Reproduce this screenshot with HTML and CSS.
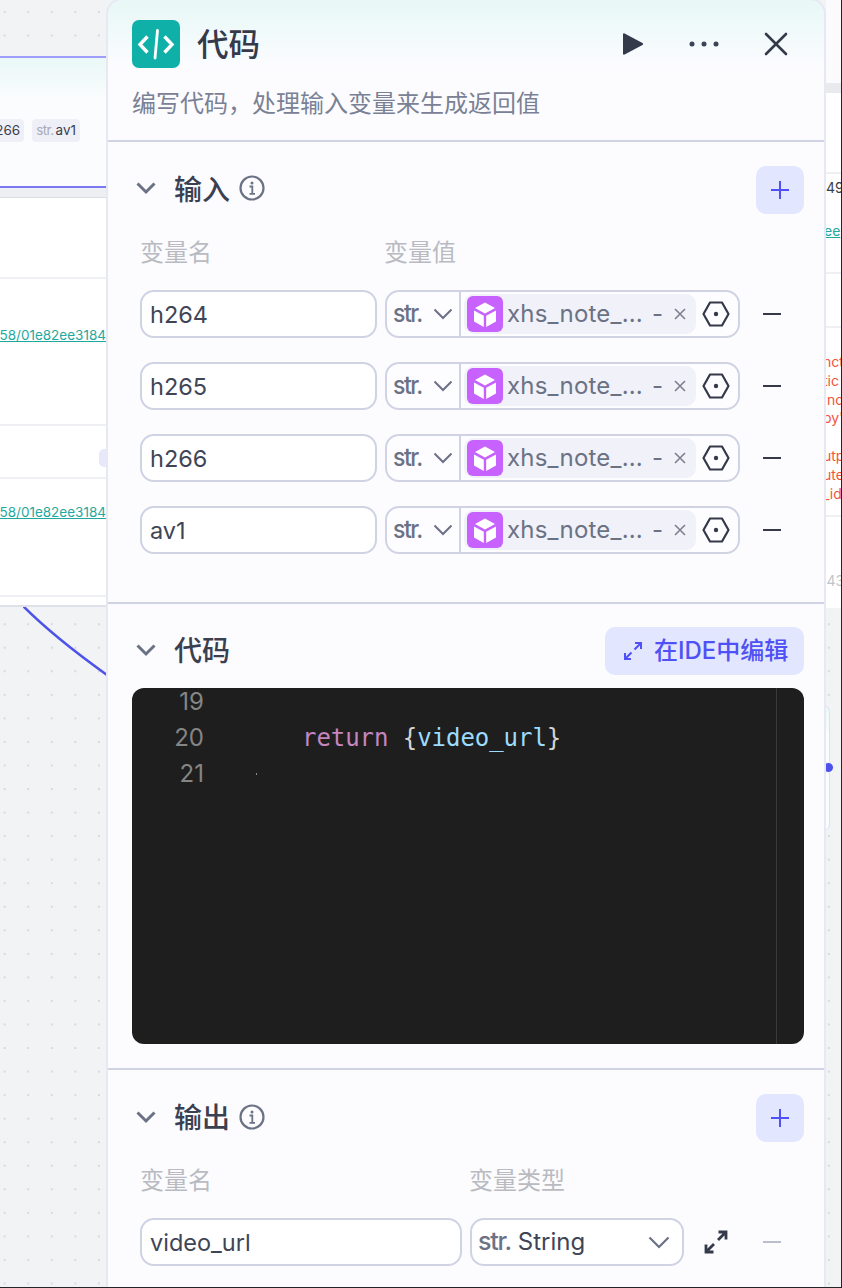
FILE: index.html
```html
<!DOCTYPE html>
<html lang="zh">
<head>
<meta charset="utf-8">
<title>代码</title>
<link rel="stylesheet" href="styles.css">
</head>
<body>
<div class="stage">
  <svg class="edge" width="84" height="72" viewBox="0 0 84 72"><path d="M0 0C26 26 56 49 84 69" fill="none" stroke="#4d53e8" stroke-width="2.600"/></svg>

  <div class="bg-left">
    <div class="mini-node">
      <div class="mini-chips">
        <span class="mini-chip chip-cut">266</span>
        <span class="mini-chip"><i>str.</i>av1</span>
      </div>
    </div>
    <div class="mini-gap"></div>
    <div class="table">
      <div class="trow r1"></div>
      <div class="trow r2"><a class="tlink">58/01e82ee3184</a></div>
      <div class="trow r3"><span class="tbadge"></span></div>
      <div class="trow r4"><a class="tlink">58/01e82ee3184</a></div>
      <div class="trow r5"></div>
    </div>
  </div>

  <div class="bg-right">
    <div class="rtop"></div>
    <div class="rgap"></div>
    <div class="rtable">
      <div class="rrow h81"></div>
      <div class="rrow h100 num"><span class="rnum">49</span><a class="rlink">ee</a></div>
      <div class="rrow h54"></div>
      <div class="rrow h189 red">
        <div>nct</div><div>tic</div><div>&nbsp;nc</div><div>py'</div><div>&nbsp;</div><div>utp</div><div>ute</div><div>_id</div>
      </div>
      <div class="rrow h90 gray">543</div>
    </div>
  </div>

  <div class="side-node"><span class="side-dot"></span></div>

  <section class="panel">
    <header class="phead">
      <div class="ptitle-row">
        <span class="logo">
          <svg width="48" height="48" viewBox="0 0 48 48" fill="none" stroke="#fff" stroke-width="3.400"><path d="M15.500 16.500 8 24.500l7.500 8M32.500 16.500 40 24.500l-7.500 8" stroke-linejoin="miter"/><path d="M25.500 10.500 23 38" stroke-width="2.800" stroke-linecap="round"/></svg>
        </span>
        <h1 class="ptitle">代码</h1>
        <div class="pactions">
          <svg class="act-play" width="24" height="24" viewBox="0 0 24 24"><path d="M2 2.500C2 1.500 2.800 1 3.600 1.400L21.500 11c.8.4.8 1.600 0 2L3.600 22.600C2.800 23 2 22.500 2 21.500Z" fill="#343a4a"/></svg>
          <svg class="act-more" width="32" height="8" viewBox="0 0 32 8" fill="#3d4354"><circle cx="4" cy="4" r="2.500"/><circle cx="16" cy="4" r="2.500"/><circle cx="28" cy="4" r="2.500"/></svg>
          <svg class="act-close" width="24" height="24" viewBox="0 0 24 24" fill="none" stroke="#343a4a" stroke-width="2.600" stroke-linecap="round"><path d="M2 2 22 22M22 2 2 22"/></svg>
        </div>
      </div>
      <p class="psub">编写代码，处理输入变量来生成返回值</p>
    </header>

    <div class="sec sec-in">
      <div class="sec-head">
        <svg class="caret" width="24" height="24" viewBox="0 0 24 24" fill="none" stroke="#6b7285" stroke-width="3"><path d="M3.500 7.500 12 16l8.500-8.500"/></svg>
        <h2 class="sec-title">输入</h2>
        <svg class="info" width="26" height="26" viewBox="0 0 26 26" fill="none" stroke="#6b7285" stroke-width="2.200"><circle cx="13" cy="13" r="11.500"/><path d="M10.500 11.500H13.300V18.500M10.500 18.800H16" stroke-width="1.800"/><circle cx="13" cy="8" r="1.500" fill="#6b7285" stroke="none"/></svg>
        <button class="add"><svg width="20" height="20" viewBox="0 0 20 20" stroke="#4f50f5" stroke-width="2" fill="none"><path d="M1 10h18M10 1v18"/></svg></button>
      </div>
      <div class="labels l-in"><span>变量名</span><span>变量值</span></div>

      <div class="vrow"><div class="box name">h264</div><div class="box val"><span class="stype"><b>str.</b><svg class="vchev" width="20" height="12" viewBox="0 0 20 12" fill="none" stroke="#6b7285" stroke-width="2"><path d="M1.500 1.500 10 10l8.500-8.500"/></svg></span><span class="vchip"><span class="cube"><svg width="28" height="28" viewBox="0 0 28 28" fill="#fff"><path d="M14 2.500 24 8l-10 5.500L4 8Z"/><path d="M3 10.500l9.800 5.300V27L3 21.500ZM25 10.500l-9.800 5.300V27L25 21.500Z"/></svg></span><span class="cname">xhs_note_...</span><span class="cdash">-</span><svg class="cx" width="12" height="12" viewBox="0 0 12 12" stroke="#80838f" stroke-width="1.700" fill="none"><path d="M1 1 11 11M11 1 1 11"/></svg></span><svg class="hex" width="28" height="26" viewBox="0 0 28 26" fill="none" stroke="#343a4a" stroke-width="2.200"><path d="M8 1.500H20L26.500 13 20 24.500H8L1.500 13Z" stroke-linejoin="round"/><circle cx="14" cy="13" r="2.200" fill="#343a4a" stroke="none"/></svg></div><span class="minus"></span></div>

      <div class="vrow"><div class="box name">h265</div><div class="box val"><span class="stype"><b>str.</b><svg class="vchev" width="20" height="12" viewBox="0 0 20 12" fill="none" stroke="#6b7285" stroke-width="2"><path d="M1.500 1.500 10 10l8.500-8.500"/></svg></span><span class="vchip"><span class="cube"><svg width="28" height="28" viewBox="0 0 28 28" fill="#fff"><path d="M14 2.500 24 8l-10 5.500L4 8Z"/><path d="M3 10.500l9.800 5.300V27L3 21.500ZM25 10.500l-9.800 5.300V27L25 21.500Z"/></svg></span><span class="cname">xhs_note_...</span><span class="cdash">-</span><svg class="cx" width="12" height="12" viewBox="0 0 12 12" stroke="#80838f" stroke-width="1.700" fill="none"><path d="M1 1 11 11M11 1 1 11"/></svg></span><svg class="hex" width="28" height="26" viewBox="0 0 28 26" fill="none" stroke="#343a4a" stroke-width="2.200"><path d="M8 1.500H20L26.500 13 20 24.500H8L1.500 13Z" stroke-linejoin="round"/><circle cx="14" cy="13" r="2.200" fill="#343a4a" stroke="none"/></svg></div><span class="minus"></span></div>

      <div class="vrow"><div class="box name">h266</div><div class="box val"><span class="stype"><b>str.</b><svg class="vchev" width="20" height="12" viewBox="0 0 20 12" fill="none" stroke="#6b7285" stroke-width="2"><path d="M1.500 1.500 10 10l8.500-8.500"/></svg></span><span class="vchip"><span class="cube"><svg width="28" height="28" viewBox="0 0 28 28" fill="#fff"><path d="M14 2.500 24 8l-10 5.500L4 8Z"/><path d="M3 10.500l9.800 5.300V27L3 21.500ZM25 10.500l-9.800 5.300V27L25 21.500Z"/></svg></span><span class="cname">xhs_note_...</span><span class="cdash">-</span><svg class="cx" width="12" height="12" viewBox="0 0 12 12" stroke="#80838f" stroke-width="1.700" fill="none"><path d="M1 1 11 11M11 1 1 11"/></svg></span><svg class="hex" width="28" height="26" viewBox="0 0 28 26" fill="none" stroke="#343a4a" stroke-width="2.200"><path d="M8 1.500H20L26.500 13 20 24.500H8L1.500 13Z" stroke-linejoin="round"/><circle cx="14" cy="13" r="2.200" fill="#343a4a" stroke="none"/></svg></div><span class="minus"></span></div>

      <div class="vrow"><div class="box name">av1</div><div class="box val"><span class="stype"><b>str.</b><svg class="vchev" width="20" height="12" viewBox="0 0 20 12" fill="none" stroke="#6b7285" stroke-width="2"><path d="M1.500 1.500 10 10l8.500-8.500"/></svg></span><span class="vchip"><span class="cube"><svg width="28" height="28" viewBox="0 0 28 28" fill="#fff"><path d="M14 2.500 24 8l-10 5.500L4 8Z"/><path d="M3 10.500l9.800 5.300V27L3 21.500ZM25 10.500l-9.800 5.300V27L25 21.500Z"/></svg></span><span class="cname">xhs_note_...</span><span class="cdash">-</span><svg class="cx" width="12" height="12" viewBox="0 0 12 12" stroke="#80838f" stroke-width="1.700" fill="none"><path d="M1 1 11 11M11 1 1 11"/></svg></span><svg class="hex" width="28" height="26" viewBox="0 0 28 26" fill="none" stroke="#343a4a" stroke-width="2.200"><path d="M8 1.500H20L26.500 13 20 24.500H8L1.500 13Z" stroke-linejoin="round"/><circle cx="14" cy="13" r="2.200" fill="#343a4a" stroke="none"/></svg></div><span class="minus"></span></div>
    </div>

    <div class="sec sec-code">
      <div class="sec-head">
        <svg class="caret" width="24" height="24" viewBox="0 0 24 24" fill="none" stroke="#6b7285" stroke-width="3"><path d="M3.500 7.500 12 16l8.500-8.500"/></svg>
        <h2 class="sec-title">代码</h2>
        <button class="ide"><svg width="20" height="20" viewBox="0 0 20 20" fill="none" stroke="#4f50f5" stroke-width="2"><path d="M12 2h6v6M18 2l-6.500 6.500M8 18H2v-6M2 18l6.500-6.500"/></svg>在IDE中编辑</button>
      </div>
      <div class="code">
        <div class="gutter"><span>19</span><span>20</span><span>21</span></div>
        <div class="src"><span>&nbsp;</span><span><em class="kw">return</em> <em class="br">{</em><em class="id">video_url</em><em class="br">}</em></span></div>
        <div class="mini-map"></div>
        <span class="speck"></span>
      </div>
    </div>

    <div class="sec sec-out">
      <div class="sec-head">
        <svg class="caret" width="24" height="24" viewBox="0 0 24 24" fill="none" stroke="#6b7285" stroke-width="3"><path d="M3.500 7.500 12 16l8.500-8.500"/></svg>
        <h2 class="sec-title">输出</h2>
        <svg class="info" width="26" height="26" viewBox="0 0 26 26" fill="none" stroke="#6b7285" stroke-width="2.200"><circle cx="13" cy="13" r="11.500"/><path d="M10.500 11.500H13.300V18.500M10.500 18.800H16" stroke-width="1.800"/><circle cx="13" cy="8" r="1.500" fill="#6b7285" stroke="none"/></svg>
        <button class="add"><svg width="20" height="20" viewBox="0 0 20 20" stroke="#4f50f5" stroke-width="2" fill="none"><path d="M1 10h18M10 1v18"/></svg></button>
      </div>
      <div class="labels l-out"><span>变量名</span><span>变量类型</span></div>
      <div class="vrow orow">
        <div class="box name">video_url</div>
        <div class="box osel"><b>str.</b><span class="oname">String</span><svg class="ochev" width="22" height="13" viewBox="0 0 22 13" fill="none" stroke="#6b7285" stroke-width="2.200"><path d="M1.500 1.500 11 11l9.500-9.500"/></svg></div>
        <svg class="oexp" width="24" height="24" viewBox="0 0 24 24" fill="none" stroke="#343a4a" stroke-width="2.800"><path d="M14.500 2H22v7.500M22 2l-8 8M9.500 22H2v-7.500M2 22l8-8"/></svg>
        <span class="minus off"></span>
      </div>
    </div>
  </section>
</div>
</body>
</html>
```
FILE: styles.css
```css
* { box-sizing: border-box; }
html, body { margin: 0; padding: 0; }
body { font-family: "Inter", "Noto Sans CJK SC", sans-serif; }
.stage {
  position: relative;
  width: 842px;
  height: 1288px;
  overflow: hidden;
  border-right: 1px solid #24252a;
  border-bottom: 1px solid #24252a;
  background-color: #f2f3f5;
  background-image: radial-gradient(circle at center, #c6c8d0 0, #c6c8d0 .5px, transparent 1px);
  background-size: 23.55px 23.55px;
  background-position: -7.1px .2px;
}
.edge { position: absolute; left: 23px; top: 606px; }

/* Canvas nodes behind the panel */
.bg-left { position: absolute; left: 0; top: 56px; width: 107px; height: 551px; display: flex; flex-direction: column; }
.mini-node {
  height: 132px;
  border-top: 2px solid #a19dfb;
  border-bottom: 2px solid #7c78f2;
  background: linear-gradient(#e9f8f6 0, #fbfcfe 42px);
  padding-top: 61px;
}
.mini-chips { display: flex; justify-content: flex-end; gap: 8px; padding-right: 27px; }
.mini-chip { height: 23px; padding: 0 4px; border-radius: 4px; background: #eff0f7; font-size: 13.500px; line-height: 23px; color: #3a4050; white-space: nowrap; }
.mini-chip i { font-style: normal; color: #a8acb9; letter-spacing: -.6px; margin-right: 2px; }
.mini-gap { height: 10px; background: #eeeff2; border-bottom: 1px solid #dcdde3; }
.table { flex: 1; background: #fff; border-bottom: 2px solid #e0e1e8; display: flex; flex-direction: column; }
.trow { border-bottom: 2px solid #eff0f4; position: relative; overflow: hidden; }
.r1 { height: 81px; }
.r2 { height: 147px; }
.r3 { height: 53px; }
.r4 { height: 118px; }
.r5 { flex: 1; border-bottom: 0; }
.r2 .tlink { top: 46px; }
.r4 .tlink { top: 23px; }
.tlink { position: absolute; right: 1px; font-size: 13.500px; line-height: 20px; color: #1fa99e; text-decoration: underline; white-space: nowrap; }
.tbadge { position: absolute; right: 0; top: 23px; width: 8px; height: 18px; border-radius: 5px 0 0 5px; background: #e7e8fb; }

.bg-right { position: absolute; left: 826px; top: 0; width: 15px; height: 608px; display: flex; flex-direction: column; overflow: hidden; }
.rtop { height: 83px; background: #fbfbfe; }
.rgap { height: 10px; background: #e9eaee; }
.rtable { flex: 1; background: #fff; font-size: 14px; line-height: 18.800px; }
.rrow { border-bottom: 2px solid #eff0f4; overflow: hidden; white-space: nowrap; }
.h81 { height: 81px; }
.h100 { height: 100px; }
.h54 { height: 54px; }
.h189 { height: 189px; }
.h90 { height: 90px; border-bottom: 0; }
.rnum { display: block; margin-top: 5px; color: #3a3f4b; }
.rlink { display: block; margin-top: 24px; color: #1fa99e; text-decoration: underline; text-indent: -2px; }
.red { color: #f4533d; padding-top: 25px; text-indent: -3px; }
.gray { color: #c3c4c9; padding-top: 55px; text-indent: -8px; }

.side-node { position: absolute; left: 810px; top: 704px; width: 20px; height: 128px; border: 1px solid #dfe1ee; border-radius: 0 8px 8px 0; background: linear-gradient(#e9f8f6, #fbfcfe 30px); }
.side-dot { position: absolute; right: -5px; top: 57px; width: 11px; height: 11px; border-radius: 50%; background: #4d53e8; border: 1px solid #fff; }

/* Panel */
.panel {
  position: absolute;
  left: 106px;
  top: -2px;
  width: 720px;
  height: 1330px;
  border: 2px solid #e6e8f3;
  border-radius: 16px;
  background: linear-gradient(#e7f8f6 0, #fcfcff 68px, #fcfcff 100%);
  color: #343a4a;
}
.phead { height: 142px; padding: 20px 20px 0 24px; border-bottom: 2px solid #cfd3e4; }
.ptitle-row { display: flex; align-items: center; height: 48px; }
.logo { width: 48px; height: 48px; border-radius: 7px; background: #0fb0a8; display: block; flex: none; }
.logo svg { display: block; }
.ptitle { margin: 0 0 4px 17px; font: 500 31.500px/44px "Noto Sans CJK SC", sans-serif; }
.pactions { margin-left: auto; display: flex; align-items: center; }
.act-play { margin-right: 43px; }
.act-more { margin-right: 44px; }
.act-close { margin-right: 16px; }
.psub { margin: 16px 0 0; font: 400 24px/36px "Noto Sans CJK SC", sans-serif; color: #7a8195; }

.sec { padding: 24px 20px 48px 24px; border-bottom: 2px solid #cfd3e4; }
.sec-code { padding-top: 23px; padding-bottom: 24px; }
.sec-out { border-bottom: 0; padding-bottom: 0; }
.sec-head { display: flex; align-items: center; height: 48px; padding-left: 2px; }
.sec-title { margin: 0 0 4px 16px; font: 500 28px/44px "Noto Sans CJK SC", sans-serif; color: #3a4050; }
.caret, .info { margin-bottom: 2px; }
.info { margin-left: 9px; }
.sec-in .caret, .sec-in .info { margin-bottom: 4px; }
.sec-in .sec-title { margin-bottom: 5px; }
.add { margin-left: auto; width: 48px; height: 48px; border: 0; padding: 0; border-radius: 10px; background: #e2e6ff; display: flex; align-items: center; justify-content: center; }
.labels { display: flex; margin: 19px 0 21px 8px; font: 400 24px/36px "Noto Sans CJK SC", sans-serif; color: #b9bbc1; }
.l-in span:first-child { width: 244px; }
.l-out span:first-child { width: 329px; }

.vrow { display: flex; align-items: center; height: 48px; margin: 0 0 24px 8px; }
.vrow:last-child { margin-bottom: 0; }
.box { height: 48px; border: 2px solid #cfd3e4; border-radius: 14px; background: #fff; }
.name { width: 237px; padding: 1px 0 0 8px; font-size: 23.500px; line-height: 44px; color: #3f4556; }
.val { width: 355px; margin-left: 8px; display: flex; align-items: center; background: #fdfdff; }
.stype { width: 74px; height: 44px; flex: none; border-right: 2px solid #cfd3e4; display: flex; align-items: center; padding-left: 6px; }
.stype b, .osel b { font-weight: 500; font-size: 25px; line-height: 42px; height: 44px; letter-spacing: -1.600px; color: #6b7285; transform: scaleX(.92); transform-origin: left center; }
.osel b { transform: none; letter-spacing: -1.200px; }
.vchev { margin-left: 9px; }
.vchip { width: 232px; height: 40px; margin-left: 3px; flex: none; background: #f0f1f9; border-radius: 10px; display: flex; align-items: center; padding-left: 3px; }
.stype { position: relative; }
.stype + .vchip { margin-left: 3px; }
.cube { width: 36px; height: 36px; border-radius: 6px; background: #c862ff; display: flex; align-items: center; justify-content: center; flex: none; }
.cname { margin-left: 4px; width: 136px; overflow: hidden; white-space: nowrap; font-size: 24px; letter-spacing: .2px; line-height: 36px; color: #6b7285; }
.cdash { margin-left: 9px; font-size: 24px; line-height: 36px; color: #6b7285; }
.cx { margin-left: 11px; }
.hex { margin-left: 6px; }
.minus { width: 18px; height: 2px; background: #343a4a; margin-left: 23px; flex: none; }
.minus.off { background: #b9bdcc; margin-left: 35px; }

.ide { margin-left: auto; height: 48px; width: 199px; border: 0; padding: 0 0 0 18px; border-radius: 10px; background: #e2e6ff; display: flex; align-items: center; gap: 11px; font: 500 24px/48px "Inter", "Noto Sans CJK SC", sans-serif; color: #4f50f5; white-space: nowrap; }
.code { position: relative; margin-top: 13px; height: 356px; background: #1e1e1e; border-radius: 12px; overflow: hidden; display: flex; }
.gutter { width: 72px; flex: none; margin-top: -4px; display: flex; flex-direction: column; align-items: flex-end; font-size: 24px; line-height: 36px; color: #858585; }
.src { margin: -4px 0 0 98px; display: flex; flex-direction: column; font: 400 24px/36px "DejaVu Sans Mono", "Liberation Mono", monospace; letter-spacing: -.05px; white-space: pre; }
.src em { font-style: normal; }
.kw { color: #c586c0; }
.br { color: #d4d4d4; }
.id { color: #9cdcfe; }
.mini-map { position: absolute; right: 0; top: 0; bottom: 0; width: 28px; border-left: 1px solid #3a3a3a; }
.speck { position: absolute; left: 124px; top: 85px; width: 1px; height: 2px; background: #8a8a8a; }

.orow .name { width: 322px; }
.osel { width: 214px; margin-left: 8px; display: flex; align-items: center; padding-left: 6px; }
.oname { margin-left: 7px; font-size: 24px; line-height: 44px; color: #3f4556; }
.ochev { margin-left: auto; margin-right: 12px; }
.oexp { margin-left: 20px; flex: none; }
```
